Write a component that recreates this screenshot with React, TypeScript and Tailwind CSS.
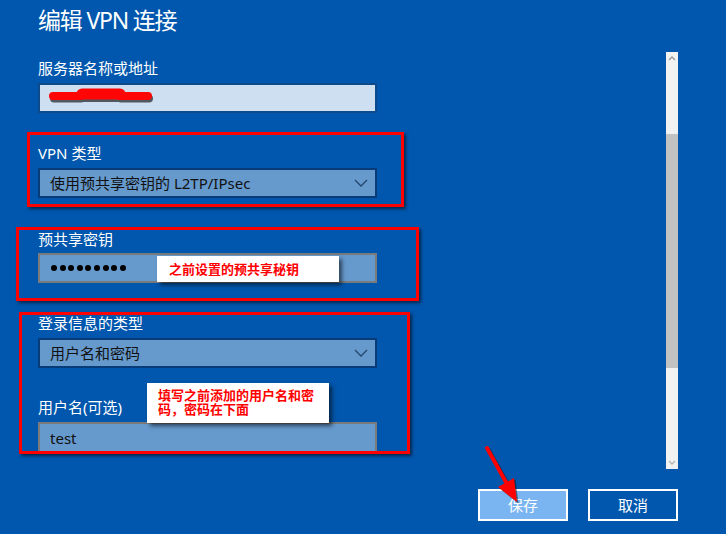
import React from "react";

const Chevron = () => (
  <svg width="14" height="8" viewBox="0 0 14 8" className="shrink-0">
    <path d="M1 1 L7 7 L13 1" fill="none" stroke="#24466e" strokeWidth="1.3" />
  </svg>
);

const Label = ({ children, className = "" }: { children: React.ReactNode; className?: string }) => (
  <div className={`w-fit text-[15px] leading-[20px] text-white ${className}`}>{children}</div>
);

export default function App() {
  return (
    <div className="relative w-[726px] h-[534px] overflow-hidden bg-[#0157ad] font-['Noto_Sans','Noto_Sans_CJK_SC',sans-serif]">
      <div className="flex h-[469px]">
        <div className="w-[640px] h-[452px] overflow-hidden pl-[38px]">
          <h1 className="mt-[4px] w-fit text-[23px] leading-[32px] tracking-[-1.2px] text-white">编辑 VPN 连接</h1>

          <Label className="mt-[22px]">服务器名称或地址</Label>
          <div className="relative mt-[5px] h-[30px] w-[339px] border-2 border-[#0d4a8c] bg-[#cddff0]">
            <svg width="120" height="24" className="absolute left-[6px] top-[1px]" viewBox="0 0 120 24">
              <g transform="translate(1,2.5)" opacity="0.6">
                <path d="M7 10 L34 10 M74 10 L102 10" stroke="#000" strokeWidth="8" strokeLinecap="round" fill="none" />
                <path d="M36 8 L74 8" stroke="#000" strokeWidth="11" strokeLinecap="round" fill="none" />
              </g>
              <path d="M7 10 L34 10 M74 10 L102 10" stroke="#ff0505" strokeWidth="8" strokeLinecap="round" fill="none" />
              <path d="M36 8 L74 8" stroke="#ff0505" strokeWidth="11" strokeLinecap="round" fill="none" />
            </svg>
          </div>

          <Label className="mt-[30px]">VPN 类型</Label>
          <div className="mt-[5px] flex h-[30px] w-[339px] items-center justify-between border-2 border-[#073c78] bg-[#6699cc] pl-[10px] pr-[7px]">
            <span className="text-[15px] leading-[20px] text-[#111]">使用预共享密钥的 L2TP/IPsec</span>
            <Chevron />
          </div>

          <Label className="mt-[31px]">预共享密钥</Label>
          <div className="mt-[4px] flex h-[30px] w-[339px] items-center gap-[2.6px] border-2 border-[#7a7a7a] bg-[#6699cc] pl-[11px]">
            {Array.from({ length: 9 }).map((_, i) => (
              <div key={i} className="h-[6px] w-[6px] rounded-full bg-black" />
            ))}
          </div>

          <Label className="mt-[30px]">登录信息的类型</Label>
          <div className="mt-[5px] flex h-[30px] w-[339px] items-center justify-between border-2 border-[#073c78] bg-[#6699cc] pl-[10px] pr-[7px]">
            <span className="text-[15px] leading-[20px] text-[#111]">用户名和密码</span>
            <Chevron />
          </div>

          <Label className="mt-[29px]">用户名(可选)</Label>
          <div className="mt-[5px] flex h-[32px] w-[339px] items-center border-2 border-[#7a7a7a] bg-[#6699cc] pl-[10px]">
            <span className="text-[15px] leading-[20px] text-[#111]">test</span>
          </div>
        </div>

        <div className="ml-[26px] mt-[52px] flex h-[417px] w-[12px] flex-col bg-[#f2f2f2]">
          <div className="flex h-[82px] justify-center pt-[4px]">
            <svg width="8" height="5" viewBox="0 0 8 5"><path d="M1 4 L4 1 L7 4" fill="none" stroke="#9a9a9a" strokeWidth="1.3" /></svg>
          </div>
          <div className="h-[234px] bg-[#c2c2c2]" />
          <div className="flex flex-1 items-end justify-center pb-[4px]">
            <svg width="8" height="5" viewBox="0 0 8 5"><path d="M1 1 L4 4 L7 1" fill="none" stroke="#b5b5b5" strokeWidth="1.3" /></svg>
          </div>
        </div>
      </div>

      <div className="flex justify-end gap-[20px] pr-[48px] pt-[20px]">
        <button className="flex h-[32px] w-[90px] items-center justify-center border-2 border-white bg-[#7ab5f2] text-[15px] text-white">保存</button>
        <button className="flex h-[32px] w-[90px] items-center justify-center border-2 border-white bg-[#0157ad] text-[15px] text-white">取消</button>
      </div>

      {/* annotation boxes */}
      <div className="absolute left-[27px] top-[132px] h-[75px] w-[377px] border-[3px] border-[#ff0000] shadow-[2px_2px_3px_rgba(0,0,0,0.55)]" />
      <div className="absolute left-[16px] top-[227px] h-[74px] w-[403px] border-[3px] border-[#ff0000] shadow-[2px_2px_3px_rgba(0,0,0,0.55)]" />
      <div className="absolute left-[19px] top-[312px] h-[142px] w-[391px] border-[3px] border-[#ff0000] shadow-[2px_2px_3px_rgba(0,0,0,0.55)]" />

      <div className="absolute left-[157px] top-[256px] flex h-[26px] w-[182px] items-center bg-white pl-[12px] shadow-[3px_3px_4px_rgba(0,0,0,0.55)]">
        <span className="text-[13px] font-bold leading-[16px] text-[#ff0000] font-['Noto_Sans_CJK_SC',sans-serif]">之前设置的预共享秘钥</span>
      </div>
      <div className="absolute left-[147px] top-[383px] h-[40px] w-[182px] bg-white pl-[11px] pt-[5px] shadow-[3px_3px_4px_rgba(0,0,0,0.55)]">
        <div className="text-[13px] font-bold leading-[14px] text-[#ff0000] font-['Noto_Sans_CJK_SC',sans-serif]">
          <div className="h-[14px]">填写之前添加的用户名和密</div>
          <div className="h-[14px]">码，密码在下面</div>
        </div>
      </div>

      <svg className="absolute left-[480px] top-[440px]" width="50" height="70" viewBox="480 440 50 70">
        <g transform="translate(1.5,1.5)" opacity="0.45">
          <path d="M487 448 L507 484" stroke="#000" strokeWidth="4" strokeLinecap="round" />
          <polygon points="517,502 498,487 514,478" fill="#000" />
        </g>
        <path d="M487 448 L507 484" stroke="#ff0000" strokeWidth="4" strokeLinecap="round" />
        <polygon points="517,502 498,487 514,478" fill="#ff0000" />
      </svg>
    </div>
  );
}
